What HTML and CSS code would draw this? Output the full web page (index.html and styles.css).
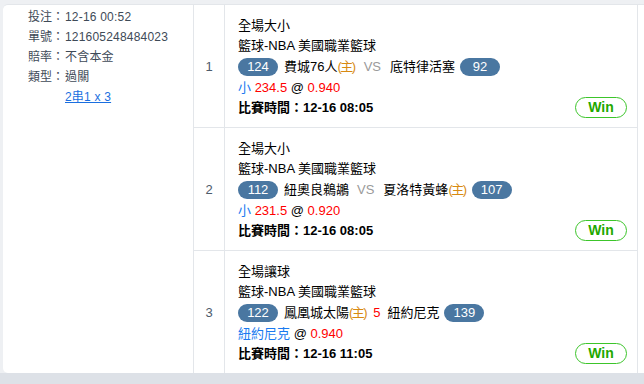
FILE: index.html
```html
<!DOCTYPE html>
<html>
<head>
<meta charset="utf-8">
<link rel="stylesheet" href="styles.css">
</head>
<body>
<div class="page">
  <div class="card">
    <div class="info">
      <div class="kv"><span class="k">投注：</span><span class="v">12-16 00:52</span></div>
      <div class="kv"><span class="k">單號：</span><span class="v">121605248484023</span></div>
      <div class="kv"><span class="k">賠率：</span><span class="v">不含本金</span></div>
      <div class="kv"><span class="k">類型：</span><span class="v">過關</span></div>
      <div class="kv"><span class="k"></span><a class="v link" href="#">2串1 x 3</a></div>
    </div>
    <div class="rows">
      <div class="row">
        <div class="num">1</div>
        <div class="bet">
          <div class="lines">
            <div class="line">全場大小</div>
            <div class="line">籃球-NBA 美國職業籃球</div>
            <div class="line teams"><span class="badge">124</span><span class="team">費城76人<span class="home">(主)</span></span><span class="vs">VS</span><span class="team">底特律活塞</span><span class="badge">92</span></div>
            <div class="line"><span class="pick">小</span> <span class="red">234.5</span> @ <span class="red">0.940</span></div>
            <div class="line time">比賽時間：12-16 08:05</div>
          </div>
          <span class="win">Win</span>
        </div>
      </div>
      <div class="row">
        <div class="num">2</div>
        <div class="bet">
          <div class="lines">
            <div class="line">全場大小</div>
            <div class="line">籃球-NBA 美國職業籃球</div>
            <div class="line teams"><span class="badge">112</span><span class="team">紐奧良鵜鶘</span><span class="vs">VS</span><span class="team">夏洛特黃蜂<span class="home">(主)</span></span><span class="badge">107</span></div>
            <div class="line"><span class="pick">小</span> <span class="red">231.5</span> @ <span class="red">0.920</span></div>
            <div class="line time">比賽時間：12-16 08:05</div>
          </div>
          <span class="win">Win</span>
        </div>
      </div>
      <div class="row">
        <div class="num">3</div>
        <div class="bet">
          <div class="lines">
            <div class="line">全場讓球</div>
            <div class="line">籃球-NBA 美國職業籃球</div>
            <div class="line teams"><span class="badge">122</span><span class="team">鳳凰城太陽<span class="home">(主)</span></span><span class="hcap">5</span><span class="team">紐約尼克</span><span class="badge">139</span></div>
            <div class="line"><span class="pick">紐約尼克</span> @ <span class="red">0.940</span></div>
            <div class="line time">比賽時間：12-16 11:05</div>
          </div>
          <span class="win">Win</span>
        </div>
      </div>
    </div>
  </div>
  <div class="foot"></div>
</div>
</body>
</html>
```
FILE: styles.css
```css
html, body {
  margin: 0;
  padding: 0;
}
body {
  background: #eef0f3;
  font-family: "Liberation Sans", "Noto Sans CJK TC", sans-serif;
  color: #000;
  width: 644px;
  height: 384px;
  overflow: hidden;
}
.page {
  display: flex;
  flex-direction: column;
  padding-top: 4px;
}
.card {
  display: flex;
  margin-left: 3px;
  background: #fff;
  border-top: 1px solid #e3e6ea;
  border-top-left-radius: 5px;
  border-bottom-left-radius: 5px;
  height: 368px;
}
.info {
  width: 191px;
  box-sizing: border-box;
  border-right: 1px solid #e3e6ea;
  padding: 2px 0 0 25px;
  font-size: 12px;
  line-height: 20px;
  color: #3e4a57;
}
.kv {
  display: flex;
}
.k {
  width: 37px;
  flex: none;
}
.v {
  letter-spacing: 0.2px;
}
.link {
  color: #1a6fe0;
  text-decoration: underline;
}
.rows {
  display: flex;
  flex-direction: column;
}
.row {
  display: flex;
  height: 122px;
  border-top: 1px solid #e3e6ea;
}
.row:first-child {
  border-top: none;
}
.num {
  width: 30px;
  border-right: 1px solid #e3e6ea;
  display: flex;
  align-items: center;
  justify-content: center;
  font-size: 13px;
  color: #4d5b6b;
}
.bet {
  width: 413px;
  border-right: 1px solid #e3e6ea;
  box-sizing: border-box;
  padding: 10px 10px 9px 13px;
  display: flex;
  justify-content: space-between;
  align-items: flex-end;
  font-size: 13px;
}
.line {
  line-height: 20px;
  white-space: nowrap;
}
.teams {
  display: flex;
  align-items: center;
  height: 22px;
}
.badge {
  display: inline-block;
  width: 40px;
  height: 18px;
  line-height: 18px;
  border-radius: 9px;
  background: #4a77a1;
  color: #fff;
  text-align: center;
}
.team {
  margin: 0 5px 0 6px;
}
.vs {
  color: #9a9a9a;
  margin: 0 3px;
}
.home {
  color: #d88a12;
  letter-spacing: -1.5px;
  margin-right: 1px;
}
.hcap {
  color: #f00;
  margin: 0 1px;
}
.pick {
  color: #1a7af0;
}
.red {
  color: #f00;
}
.time {
  font-weight: bold;
}
.win {
  width: 50px;
  height: 19px;
  line-height: 19px;
  border: 1px solid #3cc52a;
  border-radius: 11px;
  text-align: center;
  color: #1ea800;
  font-weight: bold;
  font-size: 14px;
}
.foot {
  height: 11px;
  background: #dde1e7;
}
```
